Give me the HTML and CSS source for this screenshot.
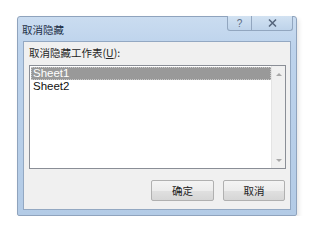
FILE: index.html
```html
<!DOCTYPE html>
<html lang="zh-CN">
<head>
<meta charset="utf-8">
<title>取消隐藏</title>
<link rel="stylesheet" href="styles.css">
</head>
<body>
<div class="dialog">
  <div class="titlebar">
    <span class="title">取消隐藏</span>
    <div class="caption-buttons">
      <div class="cap-btn help">?</div>
      <div class="cap-btn close">
        <svg width="9" height="8" viewBox="0 0 9 8"><path d="M1 0.5 L8 7.5 M8 0.5 L1 7.5" stroke="#55657c" stroke-width="1.5" fill="none"/></svg>
      </div>
    </div>
  </div>
  <div class="content">
    <div class="label">取消隐藏工作表(<u>U</u>):</div>
    <div class="listbox">
      <div class="items">
        <div class="item selected"><span class="focus">Sheet1</span></div>
        <div class="item">Sheet2</div>
      </div>
      <div class="scrollbar">
        <div class="arrow up"></div>
        <div class="arrow down"></div>
      </div>
    </div>
    <div class="buttons">
      <div class="btn">确定</div>
      <div class="btn">取消</div>
    </div>
  </div>
</div>
</body>
</html>
```
FILE: styles.css
```css
html, body {
  margin: 0;
  padding: 0;
  background: #ffffff;
}
body {
  font-family: "Noto Sans CJK SC", "Liberation Sans", sans-serif;
  font-size: 10.5px;
  color: #262626;
}
.dialog {
  margin: 16px 0 0 17px;
  width: 280px;
  height: 200px;
  box-sizing: border-box;
  border: 1px solid #8fa3bd;
  border-radius: 3px 3px 2px 2px;
  background: linear-gradient(#cadcf0, #bdd3ec 30px, #b3cbe6);
  padding: 0 5px 5px 5px;
  display: flex;
  flex-direction: column;
  box-shadow: 2px 3px 4px rgba(0,0,0,0.1);
}
.titlebar {
  height: 24px;
  display: flex;
  justify-content: space-between;
  align-items: flex-start;
}
.title {
  margin: 6px 0 0 -1px;
  line-height: 13px;
  font-size: 10.5px;
  color: #1e2f47;
}
.caption-buttons {
  display: flex;
  margin-top: -1px;
  margin-right: -2px;
}
.cap-btn {
  height: 15px;
  box-sizing: border-box;
  border: 1px solid #92a6bf;
  border-top: none;
  background: linear-gradient(#d2e2f2, #bed3ea);
  display: flex;
  align-items: center;
  justify-content: center;
  font-family: "Liberation Sans", sans-serif;
  font-size: 10px;
  color: #5a6a80;
}
.help {
  width: 25px;
  border-radius: 0 0 0 3px;
}
.close {
  width: 41px;
  border-left: none;
  border-radius: 0 0 3px 0;
}
.content {
  flex: 1;
  border: 1px solid #93a8c2;
  background: #f0f0f0;
  display: flex;
  flex-direction: column;
  padding: 0 4px 0 5px;
}
.label {
  margin-top: 4px;
  line-height: 14px;
  height: 14px;
}
.listbox {
  margin-top: 5px;
  height: 104px;
  box-sizing: border-box;
  border: 1px solid #8a8e96;
  background: #ffffff;
  display: flex;
}
.items {
  flex: 1;
  padding: 1px 0 0 1px;
}
.item {
  height: 13px;
  line-height: 13px;
  font-family: "Liberation Sans", sans-serif;
  font-size: 11.5px;
  color: #111;
}
.item.selected {
  background: #999999;
  color: #ffffff;
}
.focus {
  display: block;
  height: 13px;
  padding-left: 1px;
  box-sizing: border-box;
  border: 1px dotted #c8c8c8;
  line-height: 11px;
}
.item:not(.selected) {
  padding-left: 2px;
}
.scrollbar {
  width: 14px;
  background: #f0f0f0;
  border-left: 1px solid #e4e4e4;
  display: flex;
  flex-direction: column;
  justify-content: space-between;
  align-items: center;
  padding: 7px 0 6px;
  box-sizing: border-box;
}
.arrow {
  width: 0;
  height: 0;
  border-left: 3px solid transparent;
  border-right: 3px solid transparent;
}
.arrow.up {
  border-bottom: 3px solid #a8a8a8;
}
.arrow.down {
  border-top: 3px solid #a8a8a8;
}
.buttons {
  display: flex;
  justify-content: flex-end;
  gap: 9px;
  margin-top: 11px;
  padding-right: 1px;
}
.btn {
  width: 63px;
  height: 21px;
  box-sizing: border-box;
  border: 1px solid #b0b0b0;
  border-radius: 2px;
  background: linear-gradient(#f4f4f4, #ececec 50%, #e0e0e0 51%, #d6d6d6);
  display: flex;
  align-items: center;
  justify-content: center;
  line-height: 14px;
  color: #222;
}
.btn:last-child {
  width: 62px;
}
```
